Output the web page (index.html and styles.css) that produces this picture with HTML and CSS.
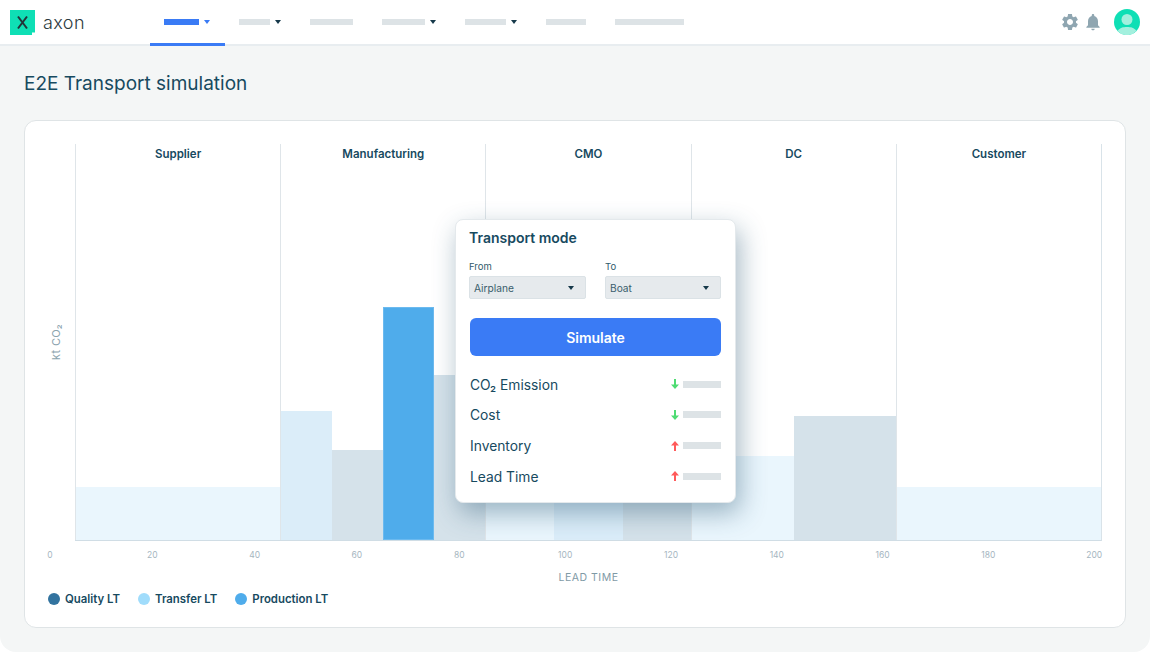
FILE: index.html
```html
<!DOCTYPE html>
<html lang="en">
<head>
<meta charset="utf-8">
<title>E2E Transport simulation</title>
<link rel="stylesheet" href="styles.css">
</head>
<body>
<div class="page">
  <header class="topbar">
    <div class="brand">
      <svg class="logo" viewBox="0 0 25 25" aria-hidden="true">
        <path d="M0 0H25V22.500H22V25H0Z" fill="#0fdfb5"/>
        <path d="M8 6.500C10.500 10 14.500 15 17 18.500M17 6.500C14.500 10 10.500 15 8 18.500" fill="none" stroke="#23343a" stroke-width="2"/>
      </svg>
      <span class="brand-name">axon</span>
    </div>
    <nav class="nav">
      <div class="nav-item active"><span class="ph w35"></span><span class="caret"></span></div>
      <div class="nav-item"><span class="ph w31"></span><span class="caret"></span></div>
      <div class="nav-item"><span class="ph w43"></span></div>
      <div class="nav-item"><span class="ph w43"></span><span class="caret"></span></div>
      <div class="nav-item"><span class="ph w41"></span><span class="caret"></span></div>
      <div class="nav-item"><span class="ph w40"></span></div>
      <div class="nav-item"><span class="ph w69"></span></div>
    </nav>
    <div class="tools">
      <svg class="tool gear" viewBox="0 0 24 24" aria-hidden="true"><path d="M19.140 12.940c.04-.3.06-.61.06-.94 0-.32-.02-.64-.07-.94l2.030-1.580c.18-.14.23-.41.12-.61l-1.920-3.320c-.12-.22-.37-.29-.59-.22l-2.390.96c-.5-.38-1.030-.7-1.620-.94l-.36-2.540c-.04-.24-.24-.41-.48-.41h-3.840c-.24 0-.43.17-.47.41l-.36 2.540c-.59.24-1.130.57-1.620.94l-2.390-.96c-.22-.08-.47 0-.59.22L2.740 8.870c-.12.21-.08.47.12.61l2.030 1.580c-.05.3-.09.63-.09.94s.02.64.07.94l-2.030 1.580c-.18.14-.23.41-.12.61l1.920 3.320c.12.22.37.29.59.22l2.390-.96c.5.38 1.030.7 1.620.94l.36 2.540c.05.24.24.41.48.41h3.840c.24 0 .44-.17.47-.41l.36-2.540c.59-.24 1.130-.56 1.620-.94l2.390.96c.22.08.47 0 .59-.22l1.920-3.320c.12-.22.07-.47-.12-.61l-2.010-1.580zM12 15.600c-1.980 0-3.600-1.620-3.600-3.600s1.620-3.600 3.600-3.600 3.600 1.620 3.600 3.600-1.620 3.600-3.600 3.600z"/></svg>
      <svg class="tool bell" viewBox="0 0 24 24" aria-hidden="true"><path d="M12 22c1.100 0 2-.9 2-2h-4c0 1.100.89 2 2 2zm6-6v-5c0-3.070-1.640-5.640-4.500-6.320V4c0-.83-.67-1.500-1.500-1.500s-1.500.67-1.500 1.500v.68C7.630 5.360 6 7.920 6 11v5l-2 2v1h16v-1l-2-2z"/></svg>
      <svg class="avatar" viewBox="0 0 26 26" aria-hidden="true">
        <circle cx="13" cy="13" r="13" fill="#0fdfb5"/>
        <circle cx="13" cy="10.500" r="5.500" fill="#a3f0de"/>
        <path d="M3.500 22C6 18.500 9 18 13 18s7 .5 9.500 4A13 13 0 0 1 3.500 22Z" fill="#a3f0de"/>
      </svg>
    </div>
  </header>

  <main class="main">
    <h1 class="title">E2E Transport simulation</h1>
    <section class="card">
      <div class="chart-row">
        <div class="y-axis"><span class="y-label">kt CO₂</span></div>
        <div class="plot">
          <div class="stage">
            <div class="stage-name">Supplier</div>
            <div class="bars"><div class="bar pale" style="height:53px"></div></div>
          </div>
          <div class="stage">
            <div class="stage-name">Manufacturing</div>
            <div class="bars">
              <div class="bar sky" style="height:129px"></div>
              <div class="bar slate" style="height:90px"></div>
              <div class="bar blue" style="height:233px"></div>
              <div class="bar slate" style="height:165px"></div>
            </div>
          </div>
          <div class="stage">
            <div class="stage-name">CMO</div>
            <div class="bars">
              <div class="bar pale" style="height:80px"></div>
              <div class="bar sky" style="height:80px"></div>
              <div class="bar slate" style="height:80px"></div>
            </div>
          </div>
          <div class="stage">
            <div class="stage-name">DC</div>
            <div class="bars">
              <div class="bar pale" style="height:84px"></div>
              <div class="bar slate" style="height:124px"></div>
            </div>
          </div>
          <div class="stage">
            <div class="stage-name">Customer</div>
            <div class="bars"><div class="bar pale" style="height:53px"></div></div>
          </div>
        </div>
      </div>
      <div class="ticks">
        <div class="tick-group">
          <span class="tick">0</span><span class="tick">20</span><span class="tick">40</span><span class="tick">60</span><span class="tick">80</span>
        </div>
        <div class="tick-group wide">
          <span class="tick">100</span><span class="tick">120</span><span class="tick">140</span><span class="tick">160</span><span class="tick">180</span><span class="tick">200</span>
        </div>
      </div>
      <div class="x-label">LEAD TIME</div>
      <div class="legend">
        <div class="legend-item"><span class="dot quality"></span>Quality LT</div>
        <div class="legend-item"><span class="dot transfer"></span>Transfer LT</div>
        <div class="legend-item"><span class="dot production"></span>Production LT</div>
      </div>

      <div class="popup">
        <h2 class="popup-title">Transport mode</h2>
        <div class="fields">
          <div class="field">
            <div class="field-label">From</div>
            <div class="select"><span>Airplane</span><span class="caret dark"></span></div>
          </div>
          <div class="field">
            <div class="field-label">To</div>
            <div class="select"><span>Boat</span><span class="caret dark"></span></div>
          </div>
        </div>
        <button class="simulate" type="button">Simulate</button>
        <div class="metrics">
          <div class="metric"><span>CO₂ Emission</span><span class="metric-value"><svg class="arrow down" viewBox="0 0 8 10" aria-hidden="true"><path d="M3 0h2v5.500h3L4 10 0 5.500h3Z"/></svg><span class="ph metric-bar"></span></span></div>
          <div class="metric"><span>Cost</span><span class="metric-value"><svg class="arrow down" viewBox="0 0 8 10" aria-hidden="true"><path d="M3 0h2v5.500h3L4 10 0 5.500h3Z"/></svg><span class="ph metric-bar"></span></span></div>
          <div class="metric"><span>Inventory</span><span class="metric-value"><svg class="arrow up" viewBox="0 0 8 10" aria-hidden="true"><path d="M3 10h2V4.500h3L4 0 0 4.500h3Z"/></svg><span class="ph metric-bar"></span></span></div>
          <div class="metric"><span>Lead Time</span><span class="metric-value"><svg class="arrow up" viewBox="0 0 8 10" aria-hidden="true"><path d="M3 10h2V4.500h3L4 0 0 4.500h3Z"/></svg><span class="ph metric-bar"></span></span></div>
        </div>
      </div>
    </section>
  </main>
</div>
</body>
</html>
```
FILE: styles.css
```css
* { box-sizing: border-box; }
html, body { margin: 0; padding: 0; background: #fff; }
body { font-family: Inter, "Noto Sans", sans-serif; color: #174a5f; }

.page {
  width: 1150px;
  height: 652px;
  background: #f4f6f6;
  border-radius: 0 0 16px 16px;
  overflow: hidden;
}

/* Top bar */
.topbar {
  height: 46px;
  display: flex;
  align-items: flex-start;
  background: #fff;
  border-bottom: 2px solid #e8edf0;
}
.brand {
  width: 150px;
  height: 44px;
  flex: none;
  display: flex;
  align-items: center;
  gap: 8px;
  padding-left: 10px;
}
.logo { width: 25px; height: 25px; flex: none; }
.brand-name {
  font-size: 18px;
  font-weight: 300;
  color: #2c3a40;
  letter-spacing: .4px;
}
.nav { display: flex; align-items: flex-start; }
.nav-item {
  display: flex;
  align-items: center;
  gap: 5px;
  padding: 0 15px 0 14px;
  height: 46px;
  border-bottom: 3px solid transparent;
}
.nav-item.active { border-bottom-color: #3a7bf5; }
.nav-item.active .ph { background: #3a7bf5; }
.nav-item.active .caret { border-top-color: #3a7bf5; }
.ph { display: block; height: 6px; background: #dde3e6; }
.w31 { width: 31px; }
.w35 { width: 35px; }
.w40 { width: 40px; }
.w41 { width: 41px; }
.w43 { width: 43px; }
.w69 { width: 69px; }
.caret {
  display: block;
  width: 0;
  height: 0;
  border-left: 3px solid transparent;
  border-right: 3px solid transparent;
  border-top: 4px solid #16394a;
}
.tools {
  margin-left: auto;
  height: 44px;
  display: flex;
  align-items: center;
  padding-right: 10px;
}
.tool { fill: #8fa6b1; flex: none; }
.gear { width: 20px; height: 20px; }
.bell { width: 20px; height: 20px; margin-left: 3px; }
.avatar { width: 26px; height: 26px; margin-left: 11px; flex: none; }

/* Main */
.main { padding: 0 24px; }
.title {
  margin: 0;
  height: 74px;
  display: flex;
  align-items: center;
  font-size: 19px;
  font-weight: 400;
  color: #174a5f;
}
.card {
  position: relative;
  height: 508px;
  background: #fff;
  border: 1px solid #dfe4e6;
  border-radius: 12px;
  padding-top: 23px;
}

/* Chart */
.chart-row { display: flex; height: 397px; }
.y-axis {
  width: 50px;
  flex: none;
  display: flex;
  align-items: center;
  padding-left: 24px;
}
.y-label {
  writing-mode: vertical-rl;
  transform: rotate(180deg);
  font-size: 11px;
  letter-spacing: .4px;
  color: #8ba3ae;
}
.plot {
  width: 1027px;
  display: grid;
  grid-template-columns: repeat(5, 1fr);
  border-right: 1px solid #d9e3e9;
  border-bottom: 1px solid #d0dde5;
}
.stage {
  display: flex;
  flex-direction: column;
  border-left: 1px solid #dfe5e9;
  min-width: 0;
}
.stage-name {
  text-align: center;
  font-size: 11.500px;
  font-weight: 600;
  line-height: 18px;
  padding-top: 1px;
  color: #174a5f;
}
.bars { flex: 1; display: flex; align-items: flex-end; }
.bar { flex: 1; }
.pale { background: #eaf6fd; }
.sky { background: #dbedf9; }
.slate { background: #d5e2ea; }
.blue { background: #4faceb; box-shadow: inset 0 0 0 1px #6cbaef; }

.ticks {
  display: flex;
  gap: 94px;
  margin: 8px 0 0 19px;
}
.tick-group { display: flex; gap: 90.300px; }
.tick-group.wide { gap: 93.800px; }
.tick {
  width: 12px;
  flex: none;
  display: flex;
  justify-content: center;
  white-space: nowrap;
  font-size: 8.500px;
  line-height: 12px;
  color: #a6b6bf;
}
.x-label {
  margin: 10px 0 0 50px;
  width: 1027px;
  text-align: center;
  font-size: 10.500px;
  line-height: 14px;
  letter-spacing: .5px;
  color: #7f9aa6;
}
.legend {
  display: flex;
  gap: 18px;
  margin: 6.500px 0 0 23px;
}
.legend-item {
  display: flex;
  align-items: center;
  gap: 5px;
  font-size: 11.400px;
  font-weight: 600;
  line-height: 14px;
  color: #174a5f;
}
.dot { width: 12px; height: 12px; border-radius: 50%; flex: none; }
.quality { background: #32739f; }
.transfer { background: #a0dcfb; }
.production { background: #4faceb; }

/* Popup */
.popup {
  position: absolute;
  left: 430px;
  top: 98px;
  width: 281px;
  height: 284px;
  background: #fff;
  border: 1px solid #e4e9ec;
  border-radius: 8px;
  padding: 9px 14px 0 13px;
  box-shadow: 4px 10px 26px rgba(40, 85, 115, .42);
}
.popup-title {
  margin: 0;
  font-size: 14px;
  font-weight: 600;
  line-height: 18px;
  color: #174a5f;
}
.fields {
  display: grid;
  grid-template-columns: 117px 116px;
  gap: 19px;
  margin-top: 14px;
}
.field-label {
  font-size: 9.500px;
  line-height: 12px;
  color: #2f5a6b;
}
.select {
  margin-top: 3px;
  height: 23px;
  display: flex;
  align-items: center;
  justify-content: space-between;
  padding: 0 11px 0 4px;
  font-size: 10.200px;
  color: #3a5d6c;
  background: #e6eaed;
  border: 1px solid #dbe2e6;
  border-radius: 2px;
}
.simulate {
  display: block;
  width: 251px;
  height: 38px;
  margin: 19px 0 0 1px;
  border: 0;
  border-radius: 6px;
  background: #3a7bf5;
  color: #fff;
  font-family: inherit;
  font-size: 14px;
  font-weight: 600;
}
.metrics { margin: 13.400px 0 0 1px; }
.metric {
  height: 30.700px;
  display: flex;
  align-items: center;
  justify-content: space-between;
  font-size: 13.800px;
  color: #174a5f;
}
.metric-value { display: flex; align-items: center; gap: 4px; padding-bottom: 1px; }
.arrow { width: 8px; height: 10px; flex: none; }
.down { fill: #4fdc73; }
.up { fill: #ff5a5a; }
.metric-bar { width: 38px; height: 7px; }
```
